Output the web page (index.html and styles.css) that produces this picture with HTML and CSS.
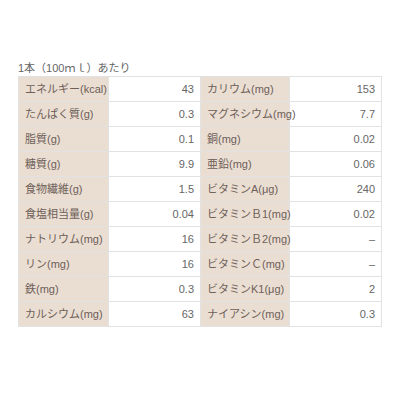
FILE: index.html
```html
<!DOCTYPE html>
<html lang="ja">
<head>
<meta charset="utf-8">
<link rel="stylesheet" href="styles.css">
</head>
<body>
<div class="wrap">
  <p class="title">1本（100ｍｌ）あたり</p>
  <table class="nutri">
    <colgroup>
      <col class="c1"><col class="c2"><col class="c3"><col class="c4">
    </colgroup>
    <tbody>
      <tr><th>エネルギー(kcal)</th><td>43</td><th>カリウム(mg)</th><td>153</td></tr>
      <tr><th>たんぱく質(g)</th><td>0.3</td><th>マグネシウム(mg)</th><td>7.7</td></tr>
      <tr><th>脂質(g)</th><td>0.1</td><th>銅(mg)</th><td>0.02</td></tr>
      <tr><th>糖質(g)</th><td>9.9</td><th>亜鉛(mg)</th><td>0.06</td></tr>
      <tr><th>食物繊維(g)</th><td>1.5</td><th>ビタミンA(μg)</th><td>240</td></tr>
      <tr><th>食塩相当量(g)</th><td>0.04</td><th>ビタミンＢ1(mg)</th><td>0.02</td></tr>
      <tr><th>ナトリウム(mg)</th><td>16</td><th>ビタミンＢ2(mg)</th><td>–</td></tr>
      <tr><th>リン(mg)</th><td>16</td><th>ビタミンＣ(mg)</th><td>–</td></tr>
      <tr><th>鉄(mg)</th><td>0.3</td><th>ビタミンK1(μg)</th><td>2</td></tr>
      <tr><th>カルシウム(mg)</th><td>63</td><th>ナイアシン(mg)</th><td>0.3</td></tr>
    </tbody>
  </table>
</div>
</body>
</html>
```
FILE: styles.css
```css
html, body {
  margin: 0;
  padding: 0;
  background: #fff;
}
.wrap {
  padding: 61px 0 0 18px;
  font-family: "Liberation Sans", "Noto Sans CJK JP", sans-serif;
  color: #666;
}
.title {
  margin: 0;
  height: 15px;
  font-size: 11px;
  line-height: 15px;
  color: #666;
}
.nutri {
  border-collapse: collapse;
  table-layout: fixed;
  width: 363px;
  font-size: 11px;
}
.c1 { width: 90px; }
.c2 { width: 92px; }
.c3 { width: 89px; }
.c4 { width: 92px; }
.nutri th,
.nutri td {
  border: 1px solid #e2e2e2;
  height: 25px;
  padding: 0 6px;
  box-sizing: border-box;
  line-height: 14px;
  white-space: nowrap;
  vertical-align: middle;
}
.nutri th {
  background: #eaded3;
  font-weight: normal;
  text-align: left;
  color: #6e6058;
}
.nutri td {
  background: #fff;
  text-align: right;
  color: #666;
}
```
